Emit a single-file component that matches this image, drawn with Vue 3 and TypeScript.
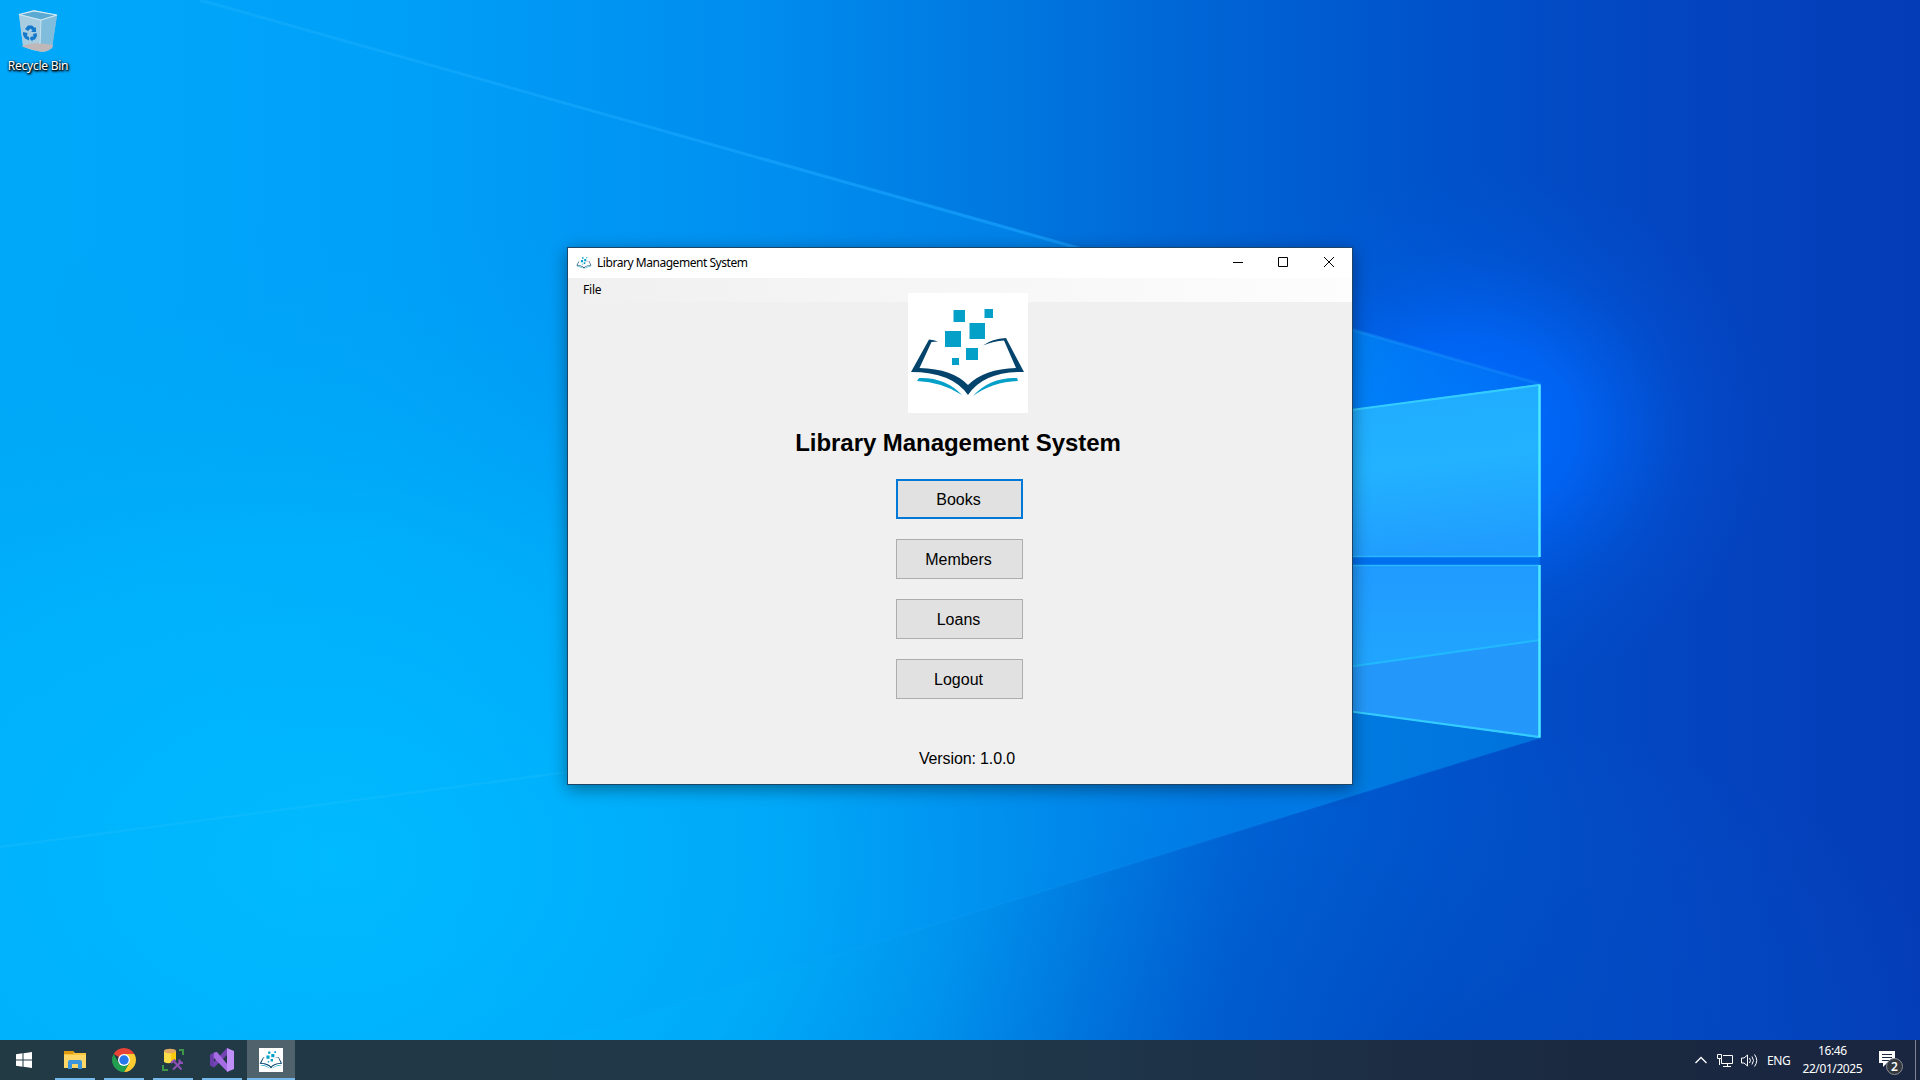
<script setup lang="ts">
interface MenuButton {
  label: string
  focused: boolean
}

interface TaskItem {
  id: string
  active: boolean
}

const buttons: MenuButton[] = [
  { label: 'Books', focused: true },
  { label: 'Members', focused: false },
  { label: 'Loans', focused: false },
  { label: 'Logout', focused: false },
]

const tasks: TaskItem[] = [
  { id: 'explorer', active: false },
  { id: 'chrome', active: false },
  { id: 'ssms', active: false },
  { id: 'vs', active: false },
  { id: 'library', active: true },
]
</script>

<template>
  <div class="desktop">
    <svg class="wallpaper" viewBox="0 0 1920 1080" aria-hidden="true">
      <defs>
        <linearGradient id="base" x1="0" y1="0" x2="1920" y2="0" gradientUnits="userSpaceOnUse">
          <stop offset="0" stop-color="#00a8fa" />
          <stop offset=".2" stop-color="#00a0f8" />
          <stop offset=".4" stop-color="#008cee" />
          <stop offset=".52" stop-color="#0078e0" />
          <stop offset=".62" stop-color="#0066d6" />
          <stop offset=".75" stop-color="#0052ca" />
          <stop offset=".88" stop-color="#0444c0" />
          <stop offset="1" stop-color="#043cb6" />
        </linearGradient>
        <radialGradient id="cyan">
          <stop offset="0" stop-color="#00bcff" />
          <stop offset=".5" stop-color="#00b4fc" stop-opacity=".75" />
          <stop offset="1" stop-color="#00a0f0" stop-opacity="0" />
        </radialGradient>
        <radialGradient id="glow">
          <stop offset="0" stop-color="#006eff" />
          <stop offset=".35" stop-color="#006aff" stop-opacity=".75" />
          <stop offset=".7" stop-color="#0060ec" stop-opacity=".22" />
          <stop offset="1" stop-color="#005ae0" stop-opacity="0" />
        </radialGradient>
        <linearGradient id="beam" x1="180" y1="0" x2="1540" y2="0" gradientUnits="userSpaceOnUse">
          <stop offset="0" stop-color="#00b0ff" stop-opacity=".1" />
          <stop offset=".5" stop-color="#009cfa" stop-opacity=".25" />
          <stop offset=".87" stop-color="#0096fc" stop-opacity=".7" />
          <stop offset="1" stop-color="#0080f4" stop-opacity=".4" />
        </linearGradient>
        <linearGradient id="edge" x1="180" y1="0" x2="1540" y2="0" gradientUnits="userSpaceOnUse">
          <stop offset="0" stop-color="#20b4ff" stop-opacity=".35" />
          <stop offset=".6" stop-color="#18a4ff" stop-opacity=".65" />
          <stop offset="1" stop-color="#2098ff" stop-opacity=".3" />
        </linearGradient>
        <radialGradient id="shade">
          <stop offset="0" stop-color="#0046bc" stop-opacity=".55" />
          <stop offset=".5" stop-color="#0050c4" stop-opacity=".3" />
          <stop offset="1" stop-color="#0060d0" stop-opacity="0" />
        </radialGradient>
        <linearGradient id="paneTop" x1="1400" y1="390" x2="1420" y2="557" gradientUnits="userSpaceOnUse">
          <stop offset="0" stop-color="#20acff" />
          <stop offset=".45" stop-color="#22b2ff" />
          <stop offset="1" stop-color="#209cff" />
        </linearGradient>
        <linearGradient id="paneBottom" x1="0" y1="565" x2="0" y2="670" gradientUnits="userSpaceOnUse">
          <stop offset="0" stop-color="#209aff" />
          <stop offset="1" stop-color="#20a6ff" />
        </linearGradient>
        <filter id="soft" x="-500%" y="-20%" width="1100%" height="140%"><feGaussianBlur stdDeviation="6" /></filter>
      </defs>
      <rect width="1920" height="1080" fill="url(#base)" />
      <ellipse cx="340" cy="860" rx="900" ry="640" fill="url(#cyan)" />
      <ellipse cx="1450" cy="1060" rx="520" ry="340" fill="url(#shade)" />
      <ellipse cx="1470" cy="430" rx="310" ry="260" fill="url(#glow)" />
      <path d="M200 0 1075 247 1353 330 1540 384V738L560 1040H0V0Z" fill="url(#beam)" opacity=".75" />
      <path d="M200 0 1075 247 1353 330 1540 384" stroke="url(#edge)" stroke-width="3" fill="none" />
      <path d="M1540 738 560 1040" stroke="url(#edge)" stroke-width="2" fill="none" opacity=".2" />
      <path d="M0 847 568 772" stroke="#38c8ff" stroke-width="2.500" fill="none" opacity=".18" />
      <path d="M1353 660 1540 738 1353 795Z" fill="#007cde" opacity=".7" />
      <path d="M1541 384V738" stroke="#0090ff" stroke-width="8" filter="url(#soft)" opacity=".5" />
      <path d="M1340 411 1540 384V557H1340Z" fill="url(#paneTop)" />
      <path d="M1340 565H1540V738L1340 710Z" fill="url(#paneBottom)" />
      <path d="M1340 668 1540 640V738L1340 710Z" fill="#2498fa" />
      <path d="M1340 668 1540 640" stroke="#22baff" stroke-width="2" />
      <path d="M1340 557H1540V565H1340Z" fill="#0070ee" />
      <path d="M1340 556.500H1539M1340 565.500H1539" stroke="#28b8ff" stroke-width="1.500" />
      <path d="M1340 411.500 1539.500 385V557M1539.500 565V737L1340 710" stroke="#34ccff" stroke-width="2.200" fill="none" />
      <path d="M1539.500 385V557M1539.500 565V737" stroke="#50e8ff" stroke-width="2.200" />
    </svg>

    <svg width="0" height="0" class="defs" aria-hidden="true">
      <symbol id="book" viewBox="0 0 120 120">
        <g fill="#04a0c8">
          <path d="M45.500 17H57V29H45.500ZM76.500 16H85V25H76.500ZM61.500 30H77V46H61.500ZM37 38H53V54H37ZM58 55H70V67H58ZM44 65H51V72H44Z" />
          <path d="M11 85Q37 84 54 102Q34 89 9 88ZM109 85Q82 84 65 103Q84 89 110 88Z" />
        </g>
        <path fill="#04446c" d="M3 79 21 46.500Q26 47 30 48.500L23.500 49 11.500 75Q45 76 60 92Q76 76 108 75L96 47.500Q86 48 75 52.500Q84 45.500 98 45L116 79Q76 78 60 102Q44 79 3 79Z" />
      </symbol>
    </svg>

    <div class="shortcut">
      <svg width="40" height="44" viewBox="0 0 40 44" aria-hidden="true">
        <path d="M1 4.500 16 0 39 5 34 38Q27 44 20 41L5 36Z" fill="#8fc8e4" />
        <path d="M1 4.500 23 10 22 41Q13 41 5 36Z" fill="#a8cce0" />
        <path d="M23 10 39 5 34 38Q29 42 22 41Z" fill="#80bcdc" />
        <path d="M1 4.500 16 .8 39 5 23 10Z" fill="#5aa9d2" stroke="#d8ecf5" stroke-width="1.200" />
        <path d="M4 36Q15 31 35 35L34 38Q27 43 20 41L5 37Z" fill="#c0b8b8" />
        <path d="M23 10 22 34" stroke="#c8e4f0" fill="none" />
        <g fill="#1478cc">
          <path d="M7 19 10 15.500H14L17 18 18 17V22H13L14.500 20.500 12.500 18.500 10 21Z" />
          <path d="M5 22 9.500 23 9 26 11 27V30.500L7 28.500 5 25Z" />
          <path d="M15 24 18.500 23 19 26 17 29.500 14.500 30V31.500L11.500 28.500 14.500 25.500V27L15.500 26.500Z" />
        </g>
      </svg>
      <span>Recycle Bin</span>
    </div>

    <main class="window">
      <header class="titlebar">
        <svg class="appicon" width="16" height="16"><use href="#book" /></svg>
        <span class="title">Library Management System</span>
        <svg class="controls" width="137" height="30" viewBox="0 0 137 30" fill="none" stroke="#000" aria-hidden="true">
          <path d="M18 14.500H28" />
          <path d="M63.500 9.500H72.500V18.500H63.500Z" />
          <path d="M109 9 119 19M119 9 109 19" />
        </svg>
      </header>
      <nav class="menubar"><span>File</span></nav>
      <section class="content">
        <svg class="logo" width="120" height="120"><use href="#book" /></svg>
        <h1>Library Management System</h1>
        <div class="buttons">
          <button v-for="b in buttons" :key="b.label" type="button" :class="{ focused: b.focused }">{{ b.label }}</button>
        </div>
        <p class="version">Version: 1.0.0</p>
      </section>
    </main>

    <footer class="taskbar">
      <div class="start">
        <svg width="16" height="16" viewBox="0 0 16 16" fill="#fff"><path d="M0 2.200 6.500 1.300V7.500H0ZM7.500 1.200 16 0V7.500H7.500ZM0 8.500H6.500V14.700L0 13.800ZM7.500 8.500H16V16L7.500 14.800Z" /></svg>
      </div>
      <div v-for="t in tasks" :key="t.id" class="task" :class="{ active: t.active }">
        <svg v-if="t.id === 'explorer'" width="24" height="24" viewBox="0 0 24 24">
          <path d="M1 3H10L12 5H23V20H1Z" fill="#f8c53c" /><path d="M1 3H10L11 5 10 6H1Z" fill="#e09a10" /><path d="M1 7H23V20H1Z" fill="#ffd766" />
          <path d="M5 21V14Q5 12 7 12H17Q19 12 19 14V21H15V16H9V21Z" fill="#3c94dc" />
        </svg>
        <svg v-else-if="t.id === 'chrome'" width="24" height="24" viewBox="0 0 24 24">
          <path d="M12 12 1.610 6A12 12 0 0 1 22.390 6Z" fill="#e84436" />
          <path d="M12 12V6H22.390A12 12 0 0 1 12 24L17.200 15Z" fill="#fccc30" />
          <path d="M12 12 17.200 15 12 24A12 12 0 0 1 1.610 6L6.800 15Z" fill="#22a050" />
          <circle cx="12" cy="12" r="6" fill="#fff" /><circle cx="12" cy="12" r="4.700" fill="#2878ec" />
        </svg>
        <svg v-else-if="t.id === 'ssms'" width="24" height="24" viewBox="0 0 24 24">
          <path d="M3 3V14Q8 17 14 13V3Z" fill="#fcdc48" /><path d="M10 3H15V12L10 15Z" fill="#fcc80c" /><ellipse cx="9" cy="3" rx="6" ry="2.300" fill="#e0a860" />
          <path d="M18 2H22V7M2 17V22H7" fill="none" stroke="#3c9848" stroke-width="2" />
          <path d="M12 21.500 20.500 13.500M13 13.500 20.500 21.500" stroke="#9050b8" stroke-width="1.900" /><path d="M10 15 14 11.500M18.500 11.500V15H22" stroke="#9050b8" stroke-width="2" fill="none" />
        </svg>
        <svg v-else-if="t.id === 'vs'" width="24" height="24" viewBox="0 0 24 24">
          <path d="M0 6.500 4 4.500V19.500L0 17.500Z" fill="#6a3cac" />
          <path d="M3.500 14.500 17 0V7L4 19.500Z" fill="#7444b4" />
          <path d="M4 4.500 7 4 17.500 16.500V24L3.500 9.500Z" fill="#a56ce4" />
          <path d="M17 0 24 3V21L17 24Z" fill="#c090f8" />
        </svg>
        <svg v-else class="tile" width="24" height="24"><use href="#book" /></svg>
      </div>
      <div class="tray">
        <svg class="chevron" width="14" height="12" viewBox="0 0 14 12" fill="none" stroke="#fff" stroke-width="1.300"><path d="M1.500 9 7 3.500 12.500 9" /></svg>
        <svg class="network" width="17" height="15" viewBox="0 0 17 15" fill="none" stroke="#fff"><path d="M6 2.500H15.500V10.500H4.500V6M10.500 10.500V13.500M6 13.500H14M.5 1.500H4.500V5.500H.5ZM2.500 5.500V12" /></svg>
        <svg class="volume" width="17" height="15" viewBox="0 0 17 15" fill="none" stroke="#fff"><path d="M.5 5H3L6.500 2V13L3 10H.5ZM8.500 5Q10.500 7.500 8.500 10M11 3.500Q14 7.500 11 11.500M13.500 1.500Q18 7.500 13.500 13.500" /></svg>
        <span class="lang">ENG</span>
        <div class="clock"><span>16:46</span><span>22/01/2025</span></div>
        <svg class="notify" width="26" height="26" viewBox="0 0 26 26">
          <path d="M1 2H17V14H9L5 18V14H1Z" fill="#fff" /><path d="M4 5.500H14M4 8.500H14M4 11.500H11" stroke="#1b2942" />
          <circle cx="16.500" cy="17.500" r="8" fill="#33383e" stroke="#8a8e94" />
          <text x="16.500" y="21.500" text-anchor="middle">2</text>
        </svg>
      </div>
    </footer>
  </div>
</template>

<style>
body {
  margin: 0;
  overflow: hidden;
}
</style>

<style scoped>
.desktop {
  position: relative;
  width: 1920px;
  height: 1080px;
  overflow: hidden;
  display: flex;
  flex-direction: column;
  justify-content: space-between;
  font-family: "Noto Sans", sans-serif;
}
.wallpaper {
  position: absolute;
  inset: 0;
  width: 1920px;
  height: 1080px;
}
.defs {
  position: absolute;
}
.shortcut {
  position: absolute;
  left: 0;
  top: 10px;
  width: 76px;
  display: flex;
  flex-direction: column;
  align-items: center;
  color: #fff;
  font-size: 12px;
  line-height: 16px;
  letter-spacing: -.25px;
  text-shadow: 1px 1px 2px #000, 0 1px 2px #000, 1px 1px 3px #000;
}
.shortcut span {
  margin-top: 4px;
  white-space: nowrap;
}
.window {
  position: absolute;
  left: 567px;
  top: 247px;
  width: 784px;
  height: 536px;
  border: 1px solid #1c4568;
  background: #f0f0f0;
  box-shadow: 0 4px 16px rgba(0, 0, 0, .4);
  display: flex;
  flex-direction: column;
}
.titlebar {
  height: 30px;
  display: flex;
  align-items: center;
  background: #fff;
  font-size: 12px;
}
.appicon {
  margin-left: 8px;
}
.title {
  flex: 1;
  margin-left: 5px;
  padding-bottom: 2px;
  letter-spacing: -.46px;
  color: #000;
}
.menubar {
  height: 24px;
  box-sizing: border-box;
  display: flex;
  align-items: center;
  padding: 0 0 2px 15px;
  font-size: 12px;
  letter-spacing: -.2px;
  background: linear-gradient(90deg, #f0f0f0, #fdfdfd);
}
.content {
  flex: 1;
  display: flex;
  flex-direction: column;
  align-items: center;
  font-family: "Liberation Sans", Arial, sans-serif;
  color: #000;
}
.logo {
  position: relative;
  margin-top: -9px;
  margin-left: 16px;
  background: #fff;
  flex: none;
}
h1 {
  margin: 16px 4px 0 0;
  font-size: 24px;
  line-height: 28px;
  letter-spacing: -.05px;
  white-space: nowrap;
}
.buttons {
  margin: 22px 1px 0 0;
  display: flex;
  flex-direction: column;
  gap: 20px;
}
button {
  width: 127px;
  height: 40px;
  padding: 2px 2px 0 0;
  border: 1px solid #adadad;
  background: #e1e1e1;
  color: #000;
  font: 16px "Liberation Sans", Arial, sans-serif;
}
button.focused {
  border: 2px solid #0078d7;
}
.version {
  margin: 51px 0 0 14px;
  font-size: 16px;
  line-height: 18px;
  letter-spacing: -.12px;
}
.taskbar {
  position: relative;
  margin-top: auto;
  height: 40px;
  display: flex;
  background: linear-gradient(90deg, #213a44, #20384a 50%, #1a2840 85%, #1a2540);
}
.start {
  width: 48px;
  display: flex;
  align-items: center;
  justify-content: center;
  margin-right: 3px;
}
.task {
  width: 40px;
  margin: 0 5px 0 4px;
  box-sizing: border-box;
  display: flex;
  align-items: center;
  justify-content: center;
  border-bottom: 2px solid #76b9ed;
  padding-top: 2px;
}
.task.active {
  width: 48px;
  margin: 0;
  background: #50636d;
}
.tile {
  background: #fff;
}
.tray {
  margin-left: auto;
  width: 227px;
  display: flex;
  align-items: center;
  color: #fff;
  font-size: 12px;
  border-right: 1px solid #7d8593;
  margin-right: 4px;
}
.chevron {
  margin-left: 6px;
}
.network {
  margin-left: 9px;
}
.volume {
  margin-left: 7px;
}
.lang {
  margin-left: 9px;
  letter-spacing: -.4px;
}
.clock {
  margin-left: 12px;
  width: 60px;
  display: flex;
  flex-direction: column;
  align-items: center;
  line-height: 18px;
  letter-spacing: -.4px;
}
.notify {
  margin-left: 16px;
  margin-top: 3px;
  flex: none;
}
.notify text {
  fill: #fff;
  font-size: 12px;
  font-weight: 600;
}
</style>
